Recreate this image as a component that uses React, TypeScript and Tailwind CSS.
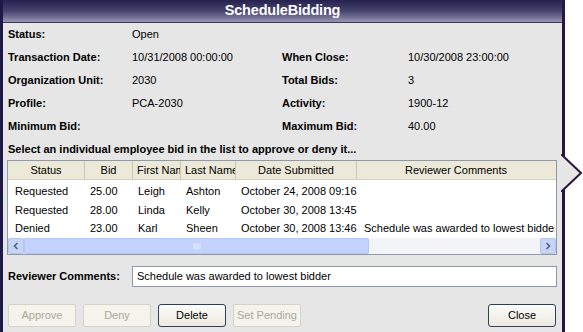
import React from 'react'

const font = { fontFamily: "Tahoma, 'Liberation Sans', Arial, sans-serif" }

const info = [
  ['Status:', 'Open', '', ''],
  ['Transaction Date:', '10/31/2008 00:00:00', 'When Close:', '10/30/2008 23:00:00'],
  ['Organization Unit:', '2030', 'Total Bids:', '3'],
  ['Profile:', 'PCA-2030', 'Activity:', '1900-12'],
  ['Minimum Bid:', '', 'Maximum Bid:', '40.00'],
]

const cols = [
  { name: 'Status', w: 'w-[77px]' },
  { name: 'Bid', w: 'w-[48px]' },
  { name: 'First Name', w: 'w-[48px]' },
  { name: 'Last Name', w: 'w-[55px]' },
  { name: 'Date Submitted', w: 'w-[121px]' },
  { name: 'Reviewer Comments', w: 'w-[198px]' },
]

const rows = [
  ['Requested', '25.00', 'Leigh', 'Ashton', 'October 24, 2008 09:16', ''],
  ['Requested', '28.00', 'Linda', 'Kelly', 'October 30, 2008 13:45', ''],
  ['Denied', '23.00', 'Karl', 'Sheen', 'October 30, 2008 13:46', 'Schedule was awarded to lowest bidder'],
]

function Btn({ label, disabled }: { label: string; disabled?: boolean }) {
  return disabled ? (
    <div className="w-[68px] h-[23px] flex items-center justify-center rounded-[2px] border border-[#d6d4c8] bg-[#f4f3ec] text-[#aca899]">
      {label}
    </div>
  ) : (
    <div className="w-[68px] h-[23px] flex items-center justify-center rounded-[3px] border border-[#2e3f58] bg-gradient-to-b from-[#fbfbf9] to-[#eceae2] text-black">
      {label}
    </div>
  )
}

export default function App() {
  return (
    <div className="w-[583px] h-[332px] bg-white overflow-hidden relative text-[11px] text-black" style={font}>
      <div className="w-[565px] h-[332px] flex flex-col border-l-[3px] border-r-[3px] border-l-[#1c1a48] border-r-[#2a1640] bg-[#e6e6e6]">
        <div className="h-[23px] shrink-0 flex items-center justify-center bg-gradient-to-b from-[#252250] via-[#46436f] to-[#9794b2] border-b border-[#3a3760]">
          <span className="text-white font-bold text-[14.5px] tracking-[-0.2px] -mt-px">ScheduleBidding</span>
        </div>

        <div className="pl-[5px]">
          {info.map((r, i) => (
            <div key={i} className="h-[23px] grid grid-cols-[124px_150px_126px_1fr] items-center">
              <span className="font-bold">{r[0]}</span>
              <span>{r[1]}</span>
              <span className="font-bold">{r[2]}</span>
              <span>{r[3]}</span>
            </div>
          ))}
          <div className="h-[22px] flex items-center font-bold">
            Select an individual employee bid in the list to approve or deny it...
          </div>

          <div className="ml-[-1px] w-[550px] h-[95px] border border-[#8e9aac] bg-white flex flex-col">
            <div className="h-[19px] flex bg-[#ece9d8] border-b border-[#d6d2c2]">
              {cols.map((c, i) => (
                <div key={i} className={`${c.w} shrink-0 px-[4px] flex items-center overflow-hidden whitespace-nowrap ${i < 5 ? 'border-r border-[#cbc7b8]' : ''}`}>
                  <span className="w-full text-center whitespace-nowrap">{c.name}</span>
                </div>
              ))}
            </div>
            <div className="h-[2px]" />
            {rows.map((r, ri) => (
              <div key={ri} className="h-[19px] flex items-center">
                {r.map((v, ci) => (
                  <div key={ci} className={`${cols[ci].w} shrink-0 overflow-hidden whitespace-nowrap ${ci === 0 || ci === 5 ? 'pl-[7px]' : 'pl-[5px]'}`}>
                    {v}
                  </div>
                ))}
              </div>
            ))}
            <div className="h-[16px] mt-auto flex bg-[#f2f4f8]">
              <div className="w-[16px] h-[16px] flex items-center justify-center bg-[#c6d5f7] border border-[#b4c5ee] rounded-[2px]">
                <svg width="8" height="8" viewBox="0 0 8 8"><path d="M5.5 1 L2.5 4 L5.5 7" stroke="#4d6185" strokeWidth="1.6" fill="none" /></svg>
              </div>
              <div className="w-[345px] h-[16px] flex items-center justify-center bg-[#c3d3fd] border border-[#b5c6f4] rounded-[2px]">
                <svg width="8" height="6" viewBox="0 0 8 6">
                  <path d="M1 0v6M3 0v6M5 0v6M7 0v6" stroke="#e6edff" strokeWidth="1" />
                </svg>
              </div>
              <div className="flex-1" />
              <div className="w-[16px] h-[16px] flex items-center justify-center bg-[#c6d5f7] border border-[#b4c5ee] rounded-[2px]">
                <svg width="8" height="8" viewBox="0 0 8 8"><path d="M2.5 1 L5.5 4 L2.5 7" stroke="#4d6185" strokeWidth="1.6" fill="none" /></svg>
              </div>
            </div>
          </div>

          <div className="mt-[11px] h-[21px] flex items-center">
            <span className="w-[124px] font-bold">Reviewer Comments:</span>
            <div className="w-[425px] h-[21px] border border-[#8e9aac] bg-white flex items-center pl-[4px]">
              Schedule was awarded to lowest bidder
            </div>
          </div>

          <div className="mt-[17px] flex items-center gap-[7px]">
            <Btn label="Approve" disabled />
            <Btn label="Deny" disabled />
            <Btn label="Delete" />
            <Btn label="Set Pending" disabled />
            <div className="flex-1" />
            <div className="mr-[6px]"><Btn label="Close" /></div>
          </div>
        </div>
      </div>

      <svg className="absolute left-[561px] top-[154px]" width="22" height="38" viewBox="0 0 22 38">
        <path d="M1 0 L1 1 L20 19 L1 37 L1 38" fill="#e6e6e6" stroke="#2a1640" strokeWidth="2" />
      </svg>
    </div>
  )
}
